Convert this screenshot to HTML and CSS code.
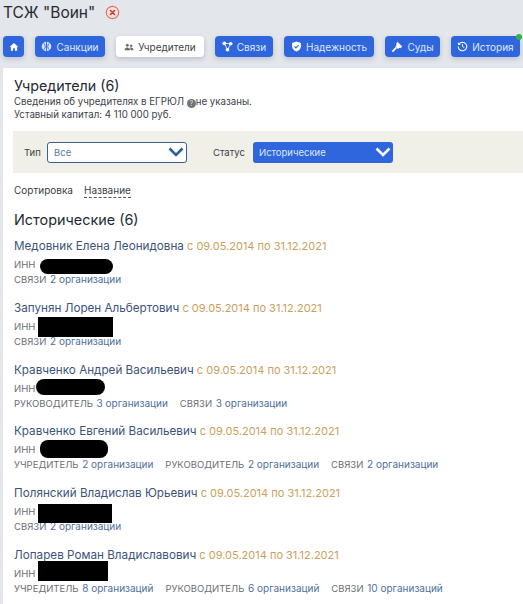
FILE: index.html
```html
<!DOCTYPE html>
<html lang="ru">
<head>
<meta charset="UTF-8">
<meta name="viewport" content="width=device-width, initial-scale=1.0">
<title>ТСЖ "Воин" - Учредители</title>
<link rel="stylesheet" href="styles.css">
</head>
<body>
<header class="title-row">
  <h1>ТСЖ "Воин"</h1>
  <svg class="status-icon" viewBox="0 0 16 16" width="15" height="15">
    <circle cx="8" cy="8" r="6.6" fill="#fbe3df" stroke="#e0736a" stroke-width="1.3"/>
    <path d="M5.8 5.8l4.4 4.4M10.2 5.8l-4.4 4.4" stroke="#c9302c" stroke-width="1.6" stroke-linecap="round"/>
  </svg>
</header>

<nav class="tabs">
  <a class="tab tab-home" href="#">
    <svg viewBox="0 0 12 12" width="10" height="10"><path d="M6 1.2L.8 6h1.5v4.6h2.6V7.6h2.2v3h2.6V6h1.5z" fill="#fff"/></svg>
  </a>
  <a class="tab tab-sanctions" href="#">
    <svg viewBox="0 0 12 12" width="11" height="11"><circle cx="6" cy="6" r="5.2" fill="#dbe6fb"/><path d="M6 1v10M3.4 2.6c1.6 2 1.6 4.8 0 6.8M8.6 2.6c-1.6 2-1.6 4.8 0 6.8" stroke="#2f66dd" fill="none"/></svg>
    Санкции
  </a>
  <a class="tab tab-active" href="#">
    <svg viewBox="0 0 12 12" width="10" height="10"><circle cx="4" cy="4" r="1.7" fill="#666"/><circle cx="8.6" cy="4.4" r="1.4" fill="#666"/><path d="M.8 10c0-2 1.4-3.3 3.2-3.3S7.2 8 7.2 10zM8 10c0-1.300-.3-2.300-1-3 .5-.2 1-.3 1.600-.3 1.500 0 2.700 1.200 2.700 3.300z" fill="#666"/></svg>
    Учредители
  </a>
  <a class="tab tab-links" href="#">
    <svg viewBox="0 0 12 12" width="11" height="11"><path d="M2.500 2.500L9.500 3M2.500 2.500L6 9.500M9.500 3L6 9.500" stroke="#e6edfc" stroke-width="1"/><circle cx="2.500" cy="2.500" r="2" fill="#fff"/><circle cx="9.500" cy="3" r="2" fill="#fff"/><circle cx="6" cy="9.500" r="2" fill="#fff"/></svg>
    Связи
  </a>
  <a class="tab tab-trust" href="#">
    <svg viewBox="0 0 12 12" width="11" height="11"><path d="M6 .6l4.800 1.600v3.500c0 2.800-2 4.800-4.800 5.700C3.200 10.500 1.200 8.500 1.200 5.700V2.200z" fill="#fff"/><path d="M3.800 5.900l1.600 1.600 2.900-3" stroke="#2f66dd" stroke-width="1.300" fill="none"/></svg>
    Надежность
  </a>
  <a class="tab tab-courts" href="#">
    <svg viewBox="0 0 12 12" width="12" height="12"><path d="M6.400 .8l4.800 4.800-1.700 1.700-1.200-.6-1.300 1.300-2.600-2.600 1.300-1.300-.6-1.200zM4.700 6.100l1.200 1.200-3.900 4-1.300-1.300z" fill="#fff"/></svg>
    Суды
  </a>
  <a class="tab tab-history" href="#">
    <svg viewBox="0 0 12 12" width="11" height="11"><path d="M2.200 3.200A4.700 4.700 0 1 1 1.300 6" stroke="#fff" stroke-width="1.100" fill="none"/><path d="M.8 1.400l.4 3 2.900-.7z" fill="#fff"/><path d="M6 3.300V6l2 1.200" stroke="#fff" fill="none"/></svg>
    История
    <span class="online-dot"></span>
  </a>
</nav>

<main class="panel">
  <section class="intro">
    <h2>Учредители (6)</h2>
    <p>Сведения об учредителях в ЕГРЮЛ <span class="hint">?</span>не указаны.</p>
    <p>Уставный капитал: 4 110 000 руб.</p>
  </section>

  <div class="filters">
    <label class="filter-label filter-type">Тип</label>
    <div class="select select-light">
      Все
      <svg viewBox="0 0 16 10" width="16" height="10"><path d="M1.500 1.500L8 8l6.500-6.500" stroke="#2f5f9e" stroke-width="2.600" fill="none"/></svg>
    </div>
    <label class="filter-label filter-status">Статус</label>
    <div class="select select-blue">
      Исторические
      <svg viewBox="0 0 16 10" width="16" height="10"><path d="M1.500 1.500L8 8l6.500-6.500" stroke="#fff" stroke-width="2.600" fill="none"/></svg>
    </div>
  </div>

  <div class="sort">
    <span>Сортировка</span>
    <a href="#">Название</a>
  </div>

  <h2 class="group-title">Исторические (6)</h2>

  <div class="person">
    <div class="person-name"><a href="#">Медовник Елена Леонидовна</a> <span class="dates">с 09.05.2014 по 31.12.2021</span></div>
    <div class="inn">ИНН <span class="redact redact-blob redact-1"></span></div>
    <div class="relations">
      <span>СВЯЗИ <a href="#">2 организации</a></span>
    </div>
  </div>

  <div class="person">
    <div class="person-name"><a href="#">Запунян Лорен Альбертович</a> <span class="dates">с 09.05.2014 по 31.12.2021</span></div>
    <div class="inn">ИНН <span class="redact redact-2"></span></div>
    <div class="relations">
      <span>СВЯЗИ <a href="#">2 организации</a></span>
    </div>
  </div>

  <div class="person">
    <div class="person-name"><a href="#">Кравченко Андрей Васильевич</a> <span class="dates">с 09.05.2014 по 31.12.2021</span></div>
    <div class="inn">ИНН <span class="redact redact-blob redact-3"></span></div>
    <div class="relations">
      <span>РУКОВОДИТЕЛЬ <a href="#">3 организации</a></span>
      <span>СВЯЗИ <a href="#">3 организации</a></span>
    </div>
  </div>

  <div class="person">
    <div class="person-name"><a href="#">Кравченко Евгений Васильевич</a> <span class="dates">с 09.05.2014 по 31.12.2021</span></div>
    <div class="inn">ИНН <span class="redact redact-blob redact-4"></span></div>
    <div class="relations">
      <span>УЧРЕДИТЕЛЬ <a href="#">2 организации</a></span>
      <span>РУКОВОДИТЕЛЬ <a href="#">2 организации</a></span>
      <span>СВЯЗИ <a href="#">2 организации</a></span>
    </div>
  </div>

  <div class="person">
    <div class="person-name"><a href="#">Полянский Владислав Юрьевич</a> <span class="dates">с 09.05.2014 по 31.12.2021</span></div>
    <div class="inn">ИНН <span class="redact redact-5"></span></div>
    <div class="relations">
      <span>СВЯЗИ <a href="#">2 организации</a></span>
    </div>
  </div>

  <div class="person">
    <div class="person-name"><a href="#">Лопарев Роман Владиславович</a> <span class="dates">с 09.05.2014 по 31.12.2021</span></div>
    <div class="inn">ИНН <span class="redact redact-6"></span></div>
    <div class="relations">
      <span>УЧРЕДИТЕЛЬ <a href="#">8 организаций</a></span>
      <span>РУКОВОДИТЕЛЬ <a href="#">6 организаций</a></span>
      <span>СВЯЗИ <a href="#">10 организаций</a></span>
    </div>
  </div>
</main>
</body>
</html>
```

FILE: styles.css
```css
html, body {
  height: 100%;
}

body {
  font-family: 'Inter', 'Liberation Sans', sans-serif;
  margin: 0;
  padding: 0;
  background-color: #e3e6ea;
  color: #333;
  overflow: hidden;
  display: flex;
  flex-direction: column;
}

a {
  text-decoration: none;
}

.title-row {
  display: flex;
  align-items: center;
  gap: 8px;
  height: 24px;
  padding-left: 3px;
}

.title-row h1 {
  margin: 0;
  font-size: 15.5px;
  font-weight: 400;
  color: #262b31;
}

.status-icon {
  margin-left: 2px;
}

.tabs {
  display: flex;
  gap: 11px;
  margin-top: 12px;
  padding-left: 3px;
  height: 21px;
}

.tab {
  position: relative;
  display: flex;
  align-items: center;
  justify-content: center;
  gap: 4px;
  height: 21px;
  border-radius: 4px;
  background-color: #2f66dd;
  color: #dfe8fb;
  font-size: 10px;
  box-shadow: 0 2px 5px rgba(60, 80, 130, 0.25);
}

.tab-home { width: 21px; }
.tab-sanctions { width: 70px; }
.tab-active { width: 88px; background-color: #fff; color: #444; }
.tab-links { width: 58px; }
.tab-trust { width: 90px; }
.tab-courts { width: 55px; }
.tab-history { width: 69px; }

.online-dot {
  position: absolute;
  top: -2px;
  right: -2px;
  width: 6px;
  height: 6px;
  border-radius: 50%;
  background-color: #2fb344;
}

.panel {
  flex: 1;
  margin: 11px 0 0 3px;
  padding: 9px 0 0 11px;
  background-color: #fff;
}

.intro h2 {
  margin: 0;
  font-size: 14.3px;
  line-height: 18px;
  font-weight: 400;
  color: #262b31;
}

.intro p {
  margin: 0;
  font-size: 9.7px;
  line-height: 13px;
  color: #3d4248;
}

.hint {
  display: inline-block;
  width: 9px;
  height: 9px;
  border-radius: 50%;
  background-color: #6f7479;
  color: #ddd;
  font-size: 7px;
  line-height: 9px;
  text-align: center;
  vertical-align: -1px;
}

.filters {
  display: flex;
  align-items: center;
  height: 42px;
  margin: 10px 0 0 -1px;
  background-color: #f0f0e8;
}

.filter-label {
  font-size: 9.5px;
  color: #3a3f44;
}

.filter-type {
  margin-left: 11px;
  width: 23px;
}

.filter-status {
  margin-left: 26px;
  width: 40px;
}

.select {
  display: flex;
  align-items: center;
  justify-content: space-between;
  box-sizing: border-box;
  width: 140px;
  height: 21px;
  padding: 0 2px 0 6px;
  border-radius: 3px;
  font-size: 9.5px;
}

.select-light {
  background-color: #fff;
  border: 1px solid #3d5f8f;
  color: #5f7a9e;
}

.select-blue {
  background-color: #2f66dd;
  color: #dfe8fb;
}

.sort {
  display: flex;
  gap: 11px;
  margin-top: 11px;
  font-size: 10px;
  line-height: 13px;
  color: #3a3f44;
}

.sort a {
  color: #3a3f44;
  border-bottom: 1px dashed #555;
}

.group-title {
  margin: 12px 0 0;
  font-size: 14.4px;
  line-height: 20px;
  font-weight: 400;
  color: #262b31;
}

.person {
  position: relative;
  height: 61.8px;
}

.person-name {
  padding-top: 8px;
  font-size: 11px;
  line-height: 16px;
}

.person-name a {
  font-size: 11.7px;
  color: #3d5478;
}

.dates {
  color: #c9a15c;
}

.inn {
  position: relative;
  margin-top: 3px;
  font-size: 9.5px;
  line-height: 15px;
  color: #6a6f75;
}

.relations {
  display: flex;
  gap: 12px;
  font-size: 9.5px;
  line-height: 15px;
  color: #6a6f75;
}

.relations a {
  font-size: 10px;
  color: #4f7199;
  margin-left: 1px;
}

.redact {
  position: absolute;
  background-color: #000;
}

.redact-blob {
  border-radius: 8px;
}

.redact-1 { left: 26px; top: 2px; width: 73px; height: 15px; }
.redact-2 { left: 24px; top: -2px; width: 75px; height: 20px; }
.redact-3 { left: 22px; top: -2px; width: 69px; height: 16px; }
.redact-4 { left: 26px; top: -2px; width: 68px; height: 18px; }
.redact-5 { left: 24px; top: 0; width: 74px; height: 19px; }
.redact-6 { left: 24px; top: -5px; width: 70px; height: 20px; }
```
